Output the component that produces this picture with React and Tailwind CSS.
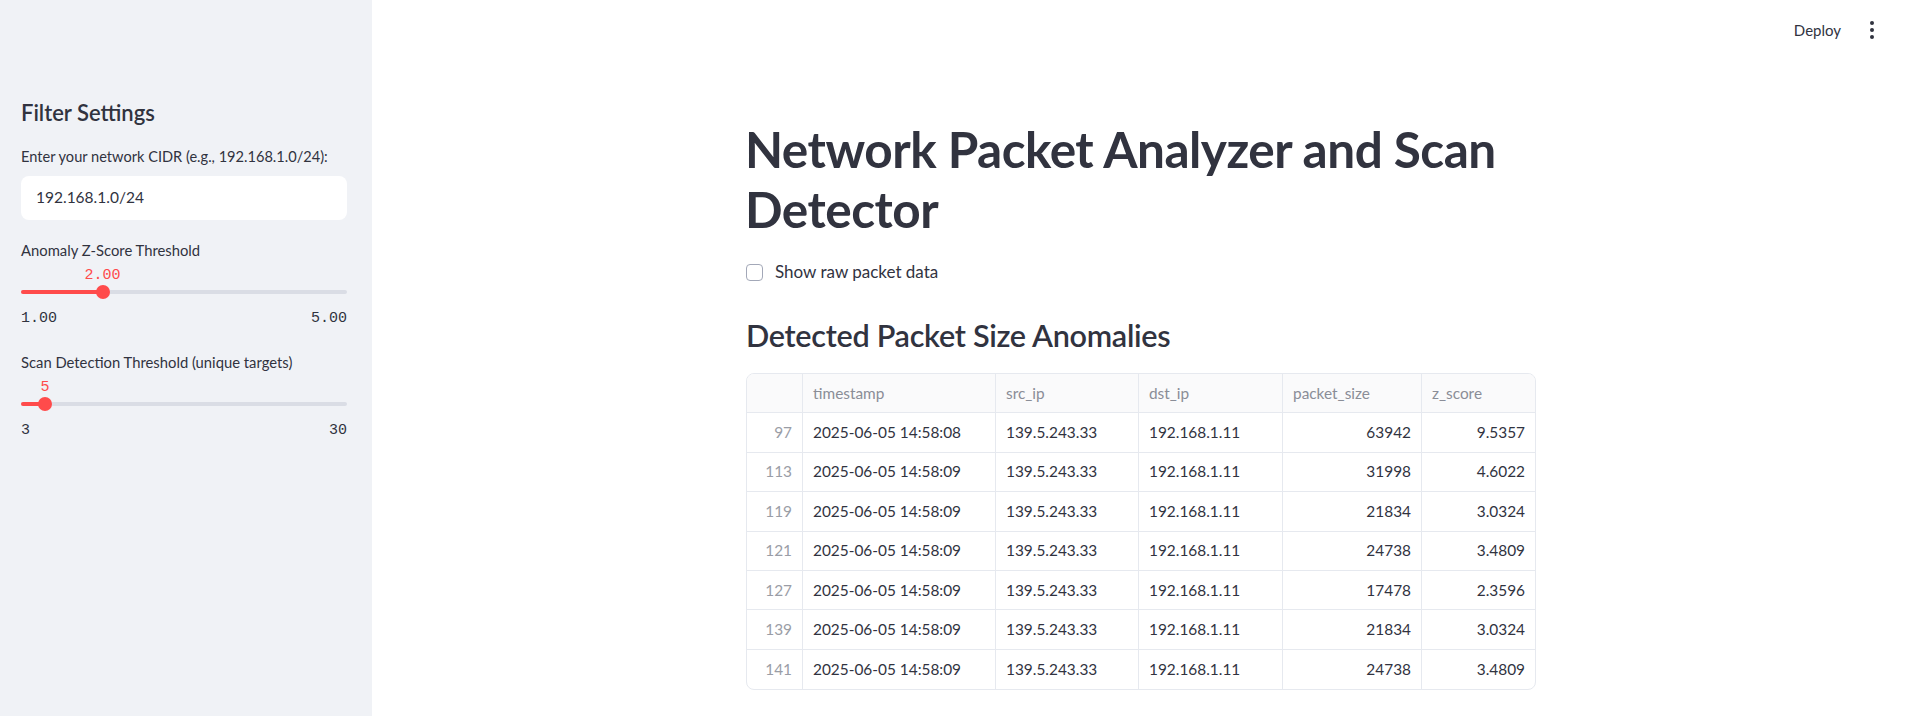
import { useState } from "react";

const ROWS = [
  [97, "2025-06-05 14:58:08", "139.5.243.33", "192.168.1.11", 63942, "9.5357"],
  [113, "2025-06-05 14:58:09", "139.5.243.33", "192.168.1.11", 31998, "4.6022"],
  [119, "2025-06-05 14:58:09", "139.5.243.33", "192.168.1.11", 21834, "3.0324"],
  [121, "2025-06-05 14:58:09", "139.5.243.33", "192.168.1.11", 24738, "3.4809"],
  [127, "2025-06-05 14:58:09", "139.5.243.33", "192.168.1.11", 17478, "2.3596"],
  [139, "2025-06-05 14:58:09", "139.5.243.33", "192.168.1.11", 21834, "3.0324"],
  [141, "2025-06-05 14:58:09", "139.5.243.33", "192.168.1.11", 24738, "3.4809"],
];

const SANS = "font-['Lato','Noto_Sans',sans-serif]";
const MONO = "font-['Liberation_Mono','DejaVu_Sans_Mono',monospace]";

export default function App() {
  const [showRaw, setShowRaw] = useState(false);
  return (
    <div className={`flex h-[716px] w-full overflow-hidden bg-white text-[#31333f] ${SANS}`}>
      <Sidebar />
      <main className="flex-1 flex flex-col min-w-0">
        <header className="h-[60px] flex items-center justify-end pr-[38px] gap-[27px]">
          <span className="text-[15px] text-[#31333f]">Deploy</span>
          <div className="flex flex-col items-center gap-[3px] w-[8px]">
            <span className="w-[4px] h-[4px] rounded-full bg-[#31333f]" />
            <span className="w-[4px] h-[4px] rounded-full bg-[#31333f]" />
            <span className="w-[4px] h-[4px] rounded-full bg-[#31333f]" />
          </div>
        </header>

        <div className="w-[790px] ml-[374px] pt-[59px]">
          <h1 className="text-[49.5px] leading-[60px] font-bold tracking-[-0.5px] text-[#31333f] -ml-[1px]">
            Network Packet Analyzer and Scan Detector
          </h1>

          <label className="flex items-center gap-[12px] mt-[22px] h-[22px] cursor-pointer" onClick={() => setShowRaw(!showRaw)}>
            <span className={`w-[17px] h-[17px] rounded-[4px] border ${showRaw ? "bg-[#ff4b4b] border-[#ff4b4b]" : "bg-white border-[#a3a8b8]"}`} />
            <span className="text-[17px]">Show raw packet data</span>
          </label>

          <h2 className="mt-[33px] text-[30.6px] leading-[40px] font-semibold tracking-[-0.3px]">Detected Packet Size Anomalies</h2>

          <div className="mt-[17px] border border-[#e6e9ef] rounded-[8px] overflow-hidden text-[15.4px]">
            <div className="flex h-[39.4px] bg-[#fafafb] border-b border-[#e6e9ef] text-[#8a8d97]">
              <div className="w-[56px] border-r border-[#e6e9ef]" />
              <HeadCell w="w-[193px]">timestamp</HeadCell>
              <HeadCell w="w-[143px]">src_ip</HeadCell>
              <HeadCell w="w-[144px]">dst_ip</HeadCell>
              <HeadCell w="w-[139px]">packet_size</HeadCell>
              <div className="flex-1 flex items-center px-[10px]">z_score</div>
            </div>
            {ROWS.map((r, i) => (
              <div key={r[0]} className={`flex h-[39.4px] ${i < ROWS.length - 1 ? "border-b border-[#e6e9ef]" : ""}`}>
                <div className="w-[56px] border-r border-[#e6e9ef] flex items-center justify-end px-[10px] text-[#9a9da6]">{r[0]}</div>
                <Cell w="w-[193px]">{r[1]}</Cell>
                <Cell w="w-[143px]">{r[2]}</Cell>
                <Cell w="w-[144px]">{r[3]}</Cell>
                <Cell w="w-[139px]" right>{r[4]}</Cell>
                <div className="flex-1 flex items-center justify-end px-[10px]">{r[5]}</div>
              </div>
            ))}
          </div>
        </div>
      </main>
    </div>
  );
}

function HeadCell({ w, children }) {
  return <div className={`${w} border-r border-[#e6e9ef] flex items-center px-[10px]`}>{children}</div>;
}

function Cell({ w, right, children }) {
  return (
    <div className={`${w} border-r border-[#e6e9ef] flex items-center px-[10px] ${right ? "justify-end" : ""}`}>
      {children}
    </div>
  );
}

function Sidebar() {
  return (
    <aside className="w-[372px] shrink-0 h-full bg-[#f0f2f6] pl-[21px] pr-[25px] pt-[97px]">
      <h3 className="text-[22px] leading-[32px] font-semibold">Filter Settings</h3>

      <div className="mt-[18px] text-[14.6px] leading-[20px]">Enter your network CIDR (e.g., 192.168.1.0/24):</div>
      <div className="mt-[9px] h-[44px] bg-white rounded-[8px] flex items-center px-[15px] text-[15.5px]">192.168.1.0/24</div>

      <div className="mt-[20px] text-[14.8px] leading-[20px]">Anomaly Z-Score Threshold</div>
      <Slider pct={25} value="2.00" min="1.00" max="5.00" />

      <div className="mt-[23px] text-[14.8px] leading-[20px]">Scan Detection Threshold (unique targets)</div>
      <Slider pct={7.4} value="5" min="3" max="30" />
    </aside>
  );
}

function Slider({ pct, value, min, max }) {
  return (
    <div className={`${MONO}`}>
      <div className="relative h-[25px]">
        <span
          className="absolute top-[7px] -translate-x-1/2 text-[15px] leading-[18px] text-[#ff4b4b]"
          style={{ left: `${pct}%` }}
        >
          {value}
        </span>
      </div>
      <div className="relative h-[14px] flex items-center">
        <div className="w-full h-[4.5px] rounded-full bg-[#dadde5]" />
        <div className="absolute left-0 h-[4.5px] rounded-full bg-[#ff4b4b]" style={{ width: `${pct}%` }} />
        <div
          className="absolute w-[14px] h-[14px] rounded-full bg-[#ff4b4b] -translate-x-1/2"
          style={{ left: `${pct}%` }}
        />
      </div>
      <div className="flex justify-between mt-[10px] text-[15px] leading-[20px] text-[#31333f]">
        <span>{min}</span>
        <span>{max}</span>
      </div>
    </div>
  );
}
